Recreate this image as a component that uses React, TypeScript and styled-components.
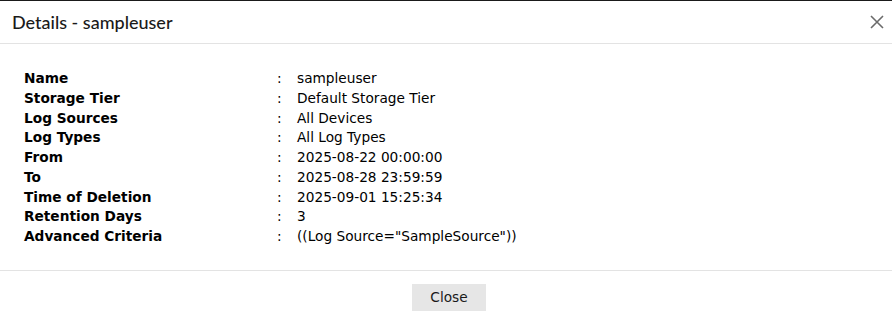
import React from 'react';
import styled, { createGlobalStyle } from 'styled-components';

const GlobalStyle = createGlobalStyle`
  html, body {
    margin: 0;
    padding: 0;
    background: #ffffff;
  }
`;

const rows: [string, string][] = [
  ['Name', 'sampleuser'],
  ['Storage Tier', 'Default Storage Tier'],
  ['Log Sources', 'All Devices'],
  ['Log Types', 'All Log Types'],
  ['From', '2025-08-22 00:00:00'],
  ['To', '2025-08-28 23:59:59'],
  ['Time of Deletion', '2025-09-01 15:25:34'],
  ['Retention Days', '3'],
  ['Advanced Criteria', '((Log Source="SampleSource"))'],
];

const App = (): JSX.Element => {
  return (
    <>
      <GlobalStyle />
      <Dialog>
        <Header>
          <Title>Details - sampleuser</Title>
          <CloseIcon aria-label="close">
            <svg width="14" height="14" viewBox="0 0 14 14">
              <path d="M1 1 L13 13 M13 1 L1 13" stroke="#6b6b6b" strokeWidth="1.6" fill="none" />
            </svg>
          </CloseIcon>
        </Header>
        <Body>
          <DetailGrid>
            {rows.map(([label, value]) => (
              <React.Fragment key={label}>
                <Label>{label}</Label>
                <Colon>:</Colon>
                <Value>{value}</Value>
              </React.Fragment>
            ))}
          </DetailGrid>
        </Body>
        <Footer>
          <Button>Close</Button>
        </Footer>
      </Dialog>
    </>
  );
};

const Dialog = styled.div`
  width: 892px;
  height: 320px;
  box-sizing: border-box;
  border-top: 1px solid #1a1a1a;
  display: flex;
  flex-direction: column;
  background: #fff;
`;

const Header = styled.div`
  height: 42px;
  display: flex;
  align-items: center;
  justify-content: space-between;
  padding: 0 7px 0 12px;
  border-bottom: 1px solid #e3e3e3;
`;

const Title = styled.div`
  font-family: Lato, 'Noto Sans', sans-serif;
  font-size: 18px;
  font-weight: 500;
  color: #1a1a1a;
`;

const CloseIcon = styled.div`
  width: 16px;
  height: 16px;
  display: flex;
  align-items: center;
  justify-content: center;
  cursor: pointer;
`;

const Body = styled.div`
  padding: 25px 24px 23px 24px;
  border-bottom: 1px solid #e3e3e3;
`;

const DetailGrid = styled.div`
  display: grid;
  grid-template-columns: 253px 20px 1fr;
  font-family: 'DejaVu Sans', Verdana, sans-serif;
  font-size: 13.7px;
  line-height: 19.75px;
  color: #000;
`;

const Label = styled.div`
  font-weight: bold;
`;

const Colon = styled.div``;

const Value = styled.div``;

const Footer = styled.div`
  flex: 1;
  display: flex;
  justify-content: center;
  padding: 13px 0 0 6px;
`;

const Button = styled.button`
  width: 74px;
  height: 27px;
  border: none;
  background: #e6e6e6;
  font-family: 'DejaVu Sans', Verdana, sans-serif;
  font-size: 13.7px;
  color: #1a1a1a;
  cursor: pointer;
`;

export default App;
